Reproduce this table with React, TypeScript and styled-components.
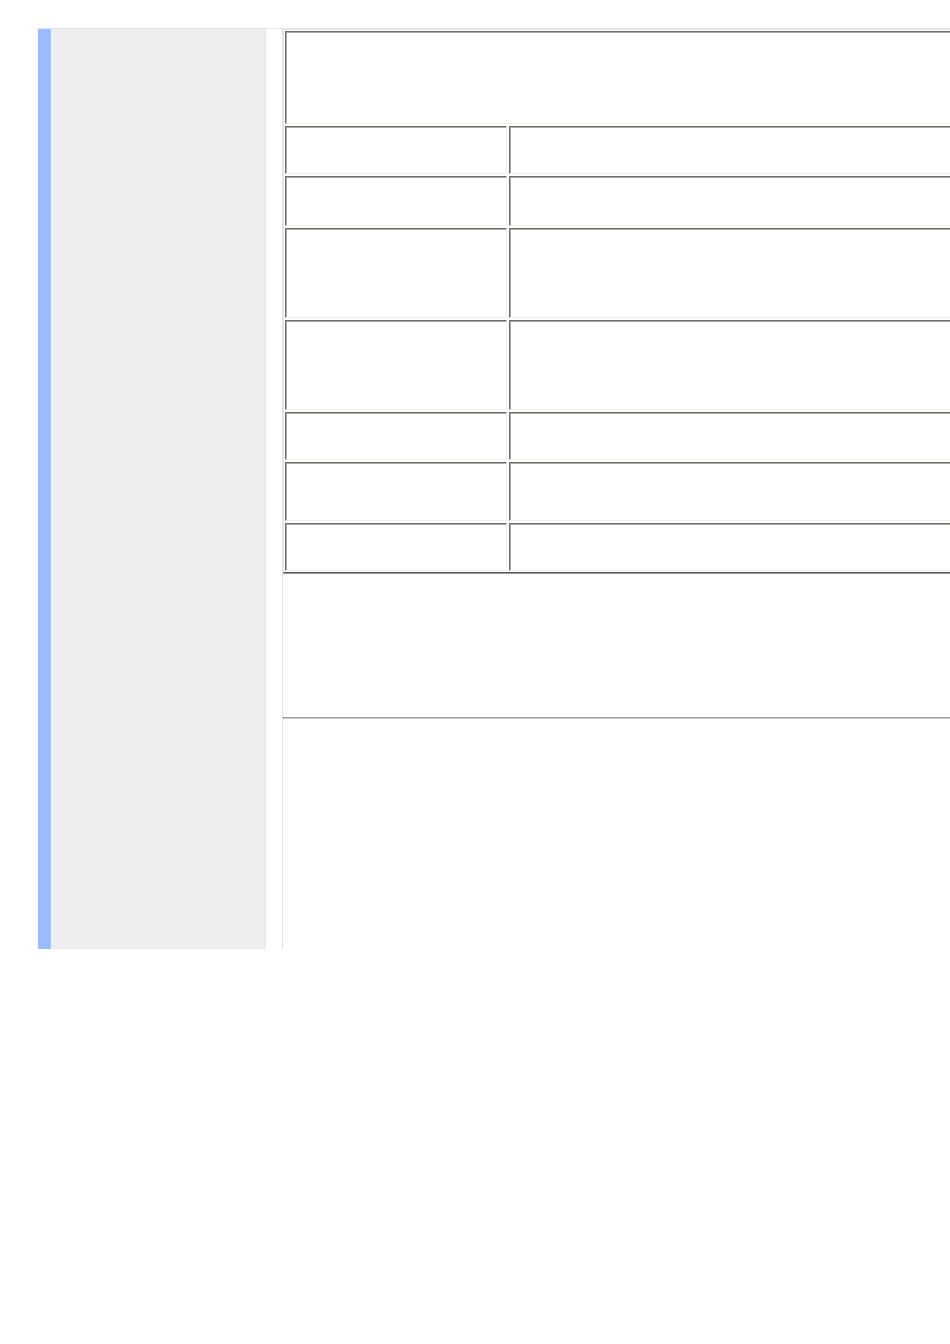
import styled, { createGlobalStyle } from "styled-components";

const GlobalStyle = createGlobalStyle`
  html, body {
    margin: 0;
    padding: 0;
    background: #ffffff;
    overflow-x: hidden;
    font-family: "Liberation Sans", Arial, sans-serif;
  }
`;

// heights of the body rows of the spec table, top to bottom
const rows = [48, 50, 90, 90, 48, 59, 48];

function App() {
  return (
    <>
      <GlobalStyle />
      <Page>
        <Frame>
          <BlueBar />
          <Sidebar />
          <Gutter />
          <Main>
            <SpecTable>
              <Cell $h={93} $span />
              {rows.map((h, i) => (
                <Row key={i}>
                  <Cell $h={h} />
                  <Cell $h={h} />
                </Row>
              ))}
            </SpecTable>
            <Notes />
            <Rule />
          </Main>
        </Frame>
      </Page>
    </>
  );
}

const Page = styled.div`
  width: 100%;
  min-height: 1344px;
  padding: 28px 0 0 38px;
  box-sizing: border-box;
  overflow: hidden;
`;

const Frame = styled.div`
  display: flex;
  height: 920px;
  border-top: 1px solid #e0e8f4;
`;

const BlueBar = styled.div`
  width: 12px;
  flex-shrink: 0;
  background: #99bbff;
  border-right: 1px solid #abc6fb;
`;

const Sidebar = styled.div`
  width: 214px;
  flex-shrink: 0;
  background: #eeeeee;
  border-right: 1px solid #e2e8f0;
`;

const Gutter = styled.div`
  width: 16px;
  flex-shrink: 0;
  border-right: 1px solid #dae5f8;
`;

const Main = styled.div`
  flex: 1;
  min-width: 0;
  overflow: hidden;
  display: flex;
  flex-direction: column;
`;

const SpecTable = styled.div`
  display: grid;
  grid-template-columns: 222px 600px;
  gap: 2px;
  width: 828px;
  padding: 1px;
  border: 1px solid;
  border-color: #e6e6e2 #555555 #555555 #e6e6e2;
  box-shadow: 0 1px 0 #9a9a9a;
`;

const Row = styled.div`
  display: contents;
`;

const Cell = styled.div<{ $h: number; $span?: boolean }>`
  height: ${(p) => p.$h}px;
  box-sizing: border-box;
  grid-column: ${(p) => (p.$span ? "1 / -1" : "auto")};
  border-top: 1px solid #6e6e66;
  border-left: 1px solid #6e6e66;
  border-right: 1px solid #f0f0ea;
  border-bottom: 1px solid #f0f0ea;
  box-shadow: inset 1px 1px 0 #a9a9a3;
`;

const Notes = styled.div`
  height: 144px;
`;

const Rule = styled.div`
  height: 1px;
  width: 100%;
  background: #9c9c9c;
  border-bottom: 1px solid #cdcdcd;
  border-left: 1px solid #7a7a7a;
`;

export default App;
